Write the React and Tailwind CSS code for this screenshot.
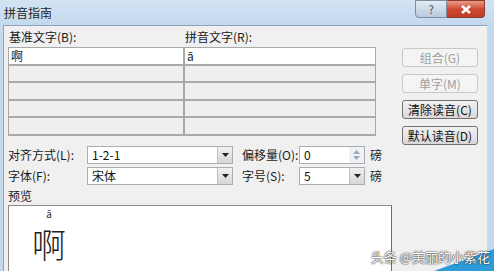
// 拼音指南 dialog (Word, Windows 7 style)

const font = { fontFamily: '"Noto Sans CJK SC", "Liberation Sans", sans-serif' };

// ─── Small pieces ─────────────────────────────────────────────────────────────
const Btn = ({ children, disabled }) => (
  <div
    className={`h-[19px] w-[76px] flex items-center justify-center rounded-[3px] border text-[12px] ${
      disabled
        ? "border-[#c8c8c8] bg-[#f4f4f4] text-[#a0a0a0]"
        : "border-[#707070] bg-gradient-to-b from-[#f2f2f2] to-[#d8d8d8] text-[#111]"
    }`}
  >
    {children}
  </div>
);

const Arrow = () => (
  <div className="w-[15px] h-full flex items-center justify-center border-l border-[#c0c0c0] bg-gradient-to-b from-[#f0f0f0] to-[#d6d6d6]">
    <svg width="7" height="4" viewBox="0 0 7 4">
      <path d="M0 0h7L3.5 4z" fill="#222" />
    </svg>
  </div>
);

const Combo = ({ value, width }) => (
  <div className={`${width} h-[18px] flex items-stretch border border-[#abadb3] bg-white`}>
    <div className="flex-1 pl-[4px] text-[12px] leading-[16px] text-[#111]">{value}</div>
    <Arrow />
  </div>
);

const Spin = ({ value }) => (
  <div className="w-[66px] h-[18px] flex items-stretch border border-[#abadb3] bg-white">
    <div className="flex-1 pl-[4px] text-[12px] leading-[16px] text-[#111]">{value}</div>
    <div className="w-[15px] flex flex-col items-center justify-center gap-[2px] bg-[#eef2f7]">
      <svg width="7" height="4" viewBox="0 0 7 4"><path d="M0 4h7L3.5 0z" fill="#9aa8b8" /></svg>
      <svg width="7" height="4" viewBox="0 0 7 4"><path d="M0 0h7L3.5 4z" fill="#9aa8b8" /></svg>
    </div>
  </div>
);

const GridRow = ({ left, right, first }) => (
  <div className={`flex h-[17.5px] ${first ? "bg-white" : "bg-[#eeeeee]"} border-b-2 border-[#a9a9a9]`}>
    <div className="w-[176px] border-r-2 border-[#a9a9a9] pl-[2px] text-[12px] leading-[16px]">{left}</div>
    <div className="flex-1 pl-[2px] text-[12px] leading-[16px]">{right}</div>
  </div>
);

// ─── App ──────────────────────────────────────────────────────────────────────
export default function App() {
  return (
    <div className="w-[494px] h-[271px] overflow-hidden relative bg-[#c6daee]" style={font}>
      {/* Title bar */}
      <div className="h-[25px] flex items-start bg-gradient-to-b from-[#d3e3f3] to-[#c4d9ee]">
        <div className="pl-[4px] pt-[4px] text-[12px] text-[#1e1e1e]">拼音指南</div>
        <div className="ml-auto mr-[9px] flex">
          <div className="w-[32px] h-[18px] rounded-bl-[4px] border border-[#7d8ea2] bg-gradient-to-b from-[#e4ecf5] to-[#b9c9da] flex items-center justify-center text-[11px] text-[#3c4b5c]">
            ?
          </div>
          <div className="w-[38px] h-[18px] rounded-br-[4px] border border-[#8c3b30] border-l-0 bg-gradient-to-b from-[#e79a88] via-[#cf4a33] to-[#c23a25] flex items-center justify-center">
            <svg width="10" height="9" viewBox="0 0 10 9">
              <path d="M1 1l8 7M9 1L1 8" stroke="#fff" strokeWidth="2.4" />
            </svg>
          </div>
        </div>
      </div>

      {/* Client area */}
      <div className="absolute left-[3px] right-[7px] top-[25px] bottom-0 bg-[#f0f0f0] border-l border-t border-[#8da3bb] text-[#1a1a1a]">
        <div className="flex pl-[4px] pt-[3px]">
          {/* Left side */}
          <div className="w-[368px]">
            <div className="flex text-[12px] leading-[16px] h-[17px]">
              <div className="w-[177px] pl-[1px]">基准文字(B):</div>
              <div>拼音文字(R):</div>
            </div>
            <div className="border border-[#a9a9a9] border-b-0 mt-[1px]">
              <GridRow first left="啊" right="ā" />
              <GridRow />
              <GridRow />
              <GridRow />
              <GridRow />
            </div>
          </div>

          {/* Buttons */}
          <div className="ml-[26px] pt-[19px] flex flex-col gap-[7px]">
            <Btn disabled>组合(G)</Btn>
            <Btn disabled>单字(M)</Btn>
            <Btn>清除读音(C)</Btn>
            <Btn>默认读音(D)</Btn>
          </div>
        </div>

        {/* Options */}
        <div className="pl-[4px] mt-[1px] flex flex-col gap-[3px] text-[12px]">
          <div className="flex items-center h-[18px]">
            <div className="w-[79px]">对齐方式(L):</div>
            <Combo value="1-2-1" width="w-[146px]" />
            <div className="w-[66px] pl-[9px]">偏移量(O):</div>
            <Spin value="0" />
            <div className="pl-[5px]">磅</div>
          </div>
          <div className="flex items-center h-[18px]">
            <div className="w-[79px]">字体(F):</div>
            <Combo value="宋体" width="w-[146px]" />
            <div className="w-[66px] pl-[9px]">字号(S):</div>
            <Combo value="5" width="w-[66px]" />
            <div className="pl-[5px]">磅</div>
          </div>
        </div>

        {/* Preview */}
        <div className="pl-[4px] mt-[4px] text-[12px] leading-[14px]">预览</div>
        <div className="ml-[4px] mt-[2px] w-[384px] h-[70px] bg-white border border-[#8a8a8a] border-r-[#6f6f6f]">
          <div className="flex flex-col items-center w-[36px] ml-[22px] pt-[3px]">
            <div className="text-[10px] leading-[10px] text-[#333]">ā</div>
            <div
              className="mt-[8px] text-[34px] leading-[34px] text-[#222]"
              style={{ fontFamily: '"Noto Sans CJK SC", serif', fontWeight: 300 }}
            >
              啊
            </div>
          </div>
        </div>
      </div>

      {/* Watermark */}
      <div className="absolute right-0 bottom-0 w-0 h-0 border-l-[60px] border-l-transparent border-b-[22px] border-b-[#2e9ad8]" />
      <div
        className="absolute right-[4px] bottom-[5px] text-[13px] text-white"
        style={{ textShadow: "0 0 2px #333, 0 0 1px #000" }}
      >
        头条 @美丽的小紫花
      </div>
    </div>
  );
}
